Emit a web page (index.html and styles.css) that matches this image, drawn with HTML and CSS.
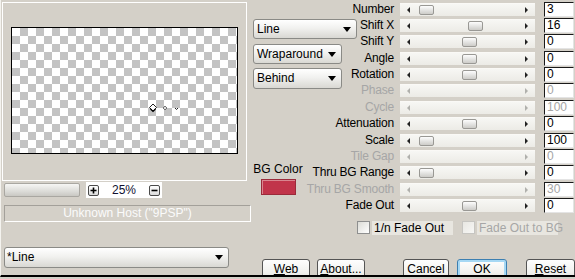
FILE: index.html
```html
<!DOCTYPE html>
<html lang="en">
<head>
<meta charset="UTF-8" />
<title>Kaleidoscope – Settings</title>
<link rel="stylesheet" href="styles.css">
</head>
<body>
<div class="dialog">

  <!-- ------ LEFT: preview + preset ------ -->
  <section class="left">
    <div class="frame">
      <div class="canvas">
        <svg class="marks" width="40" height="10" viewBox="0 0 40 10">
          <path d="M5 1 L8.5 4.5 L5 8 L1.5 4.5 Z" fill="#fff" stroke="#222" stroke-width="1"/>
          <path d="M2.5 6 L5 8.5 L7.5 6" fill="none" stroke="#000" stroke-width="1.2"/>
          <path d="M17 3 L19 5 L17 7 L15 5 Z" fill="#ddd" stroke="#555" stroke-width="0.8"/>
          <path d="M27 5 L28.5 6.5 L30 5" fill="none" stroke="#222" stroke-width="1"/>
        </svg>
      </div>
    </div>

    <div class="zoom-row">
      <div class="pan-bar"></div>
      <div class="zoom-ctrl">
        <span class="mini">
          <svg width="9" height="9" viewBox="0 0 9 9"><path d="M4.5 1.5v6M1.5 4.5h6" stroke="#000" stroke-width="1.6"/></svg>
        </span>
        <span class="zoom-val">25%</span>
        <span class="mini">
          <svg width="9" height="9" viewBox="0 0 9 9"><path d="M1.5 4.5h6" stroke="#000" stroke-width="1.6"/></svg>
        </span>
      </div>
    </div>

    <div class="host">Unknown Host ("9PSP")</div>

    <div class="combo preset"><span>*Line</span><i class="caret"></i></div>
  </section>

  <!-- ------ RIGHT: parameters ------ -->
  <section class="right">
    <div class="top">
      <div class="mid">
        <div class="combo combo-wide"><span>Line</span><i class="caret"></i></div>
        <div class="combo combo-2"><span>Wraparound</span><i class="caret"></i></div>
        <div class="combo combo-3"><span>Behind</span><i class="caret"></i></div>
        <div class="bgcolor">
          <span>BG Color</span>
          <div class="swatch"></div>
        </div>
      </div>

      <div class="params">
        <span class="lbl">Number</span>
        <div class="track"><i class="arr-l"></i><div class="lane"><b class="thumb" style="margin-left:9px"></b></div><i class="arr-r"></i></div>
        <div class="val">3</div>

        <span class="lbl">Shift X</span>
        <div class="track"><i class="arr-l"></i><div class="lane"><b class="thumb" style="margin-left:58px"></b></div><i class="arr-r"></i></div>
        <div class="val">16</div>

        <span class="lbl">Shift Y</span>
        <div class="track"><i class="arr-l"></i><div class="lane"><b class="thumb" style="margin-left:52px"></b></div><i class="arr-r"></i></div>
        <div class="val">0</div>

        <span class="lbl">Angle</span>
        <div class="track"><i class="arr-l"></i><div class="lane"><b class="thumb" style="margin-left:52px"></b></div><i class="arr-r"></i></div>
        <div class="val">0</div>

        <span class="lbl">Rotation</span>
        <div class="track"><i class="arr-l"></i><div class="lane"><b class="thumb" style="margin-left:52px"></b></div><i class="arr-r"></i></div>
        <div class="val">0</div>

        <span class="lbl off">Phase</span>
        <div class="track off"><i class="arr-l"></i><div class="lane"></div><i class="arr-r"></i></div>
        <div class="val off">0</div>

        <span class="lbl off">Cycle</span>
        <div class="track off"><i class="arr-l"></i><div class="lane"></div><i class="arr-r"></i></div>
        <div class="val off">100</div>

        <span class="lbl">Attenuation</span>
        <div class="track"><i class="arr-l"></i><div class="lane"><b class="thumb" style="margin-left:52px"></b></div><i class="arr-r"></i></div>
        <div class="val">0</div>

        <span class="lbl">Scale</span>
        <div class="track"><i class="arr-l"></i><div class="lane"><b class="thumb" style="margin-left:9px"></b></div><i class="arr-r"></i></div>
        <div class="val">100</div>

        <span class="lbl off">Tile Gap</span>
        <div class="track off"><i class="arr-l"></i><div class="lane"></div><i class="arr-r"></i></div>
        <div class="val off">0</div>

        <span class="lbl">Thru BG Range</span>
        <div class="track"><i class="arr-l"></i><div class="lane"><b class="thumb" style="margin-left:9px"></b></div><i class="arr-r"></i></div>
        <div class="val">0</div>

        <span class="lbl off">Thru BG Smooth</span>
        <div class="track off"><i class="arr-l"></i><div class="lane"></div><i class="arr-r"></i></div>
        <div class="val off">30</div>

        <span class="lbl">Fade Out</span>
        <div class="track"><i class="arr-l"></i><div class="lane"><b class="thumb" style="margin-left:52px"></b></div><i class="arr-r"></i></div>
        <div class="val">0</div>
      </div>
    </div>

    <div class="checks">
      <span class="box"></span><span class="check-label">1/n Fade Out</span>
      <span class="box off"></span><span class="check-label off">Fade Out to BG</span>
    </div>

    <div class="buttons">
      <button class="btn btn-web"><u>W</u>eb</button>
      <button class="btn btn-about"><u>A</u>bout...</button>
      <button class="btn btn-cancel">Cancel</button>
      <button class="btn btn-ok">OK</button>
      <button class="btn btn-reset"><u>R</u>eset</button>
    </div>
  </section>
</div>
</body>
</html>
```

FILE: styles.css
```css
/* ---------- Root ---------- */
:root {
  --face: #d4d0c8;
  --off: #a6a6a6;
  --row: 16.36px;
  --font: "Liberation Sans", Arial, sans-serif;
}

body {
  margin: 0;
  width: 575px;
  height: 279px;
  overflow: hidden;
  background: var(--face);
  font: 11px/13px var(--font);
  color: #000;
}

.dialog {
  display: flex;
  height: 277px;
  border-bottom: 2px solid #000;
  border-left: 1px solid #f4f3ef;
  box-sizing: border-box;
  overflow: hidden;
}

/* ---------- Left column ---------- */
.left {
  width: 250px;
  flex: none;
  display: flex;
  flex-direction: column;
}

.frame {
  margin: 2px 0 0 1px;
  width: 245px;
  height: 179px;
  box-sizing: border-box;
  border: 1px solid #fff;
  padding: 24px 0 0 8px;
}

.canvas {
  width: 227px;
  height: 127px;
  box-sizing: border-box;
  border: 1px solid #000;
  background-color: #fff;
  background-image: conic-gradient(#c3c3c3 25%, #fff 0 50%, #c3c3c3 0 75%, #fff 0);
  background-size: 16px 16px;
  padding: 75px 0 0 136px;
}
.marks { display: block; }

.zoom-row {
  display: flex;
  align-items: center;
  height: 16px;
  margin-top: 1px;
}
.pan-bar {
  margin-left: 3px;
  width: 76px;
  height: 14px;
  box-sizing: border-box;
  border: 1px solid #a9a7a1;
  border-radius: 2px;
  background: linear-gradient(#f6f6f4, #dcdcd8 60%, #c9c8c3);
}
.zoom-ctrl {
  margin-left: 6px;
  width: 76px;
  height: 16px;
  background: #fff;
  display: flex;
  align-items: center;
  justify-content: space-between;
  padding: 0 2px;
  box-sizing: border-box;
  color: #101030;
  font-size: 12px;
}
.mini {
  width: 11px;
  height: 11px;
  box-sizing: border-box;
  border: 1px solid #4a4a4a;
  border-radius: 2px;
  background: linear-gradient(#fff, #dcdcdc);
  display: flex;
  align-items: center;
  justify-content: center;
}

.host {
  margin: 7px 0 0 3px;
  width: 247px;
  height: 17px;
  box-sizing: border-box;
  border-top: 1px solid #a3a09a;
  border-left: 1px solid #a3a09a;
  border-bottom: 1px solid #fff;
  border-right: 1px solid #fff;
  color: #fbfbfb;
  text-align: center;
  line-height: 15px;
  font-size: 12px;
}

/* ---------- Combo boxes ---------- */
.combo {
  height: 20px;
  box-sizing: border-box;
  border: 1px solid #8a8a86;
  border-radius: 3px;
  background: linear-gradient(#fff, #f1f1ef 45%, #d9d8d3);
  display: flex;
  align-items: center;
  justify-content: space-between;
  padding: 0 5px 0 3px;
  font-size: 12px;
}
.caret {
  width: 0;
  height: 0;
  border-left: 4px solid transparent;
  border-right: 4px solid transparent;
  border-top: 5px solid #000;
}
.preset {
  margin: 25px 0 0 3px;
  width: 225px;
  height: 21px;
  padding-left: 2px;
}

/* ---------- Right column ---------- */
.right {
  flex: 1;
  display: flex;
  flex-direction: column;
}

.top {
  display: grid;
  grid-template-columns: 106px 1fr;
}
.mid, .params { grid-area: 1 / 1 / 2 / 3; }

.mid {
  display: flex;
  flex-direction: column;
  align-items: flex-start;
  padding: 19px 0 0 2px;
}
.combo-wide { width: 104px; }
.combo-2 { width: 89px; margin-top: 5px; }
.combo-3 { width: 89px; margin-top: 4px; height: 21px; }

.bgcolor {
  width: 50px;
  margin-top: 74px;
  display: flex;
  flex-direction: column;
  align-items: center;
  font-size: 12px;
}
.swatch {
  margin-top: 3px;
  width: 35px;
  height: 16px;
  box-sizing: border-box;
  background: #c1344a;
  border: 1px solid #9a2a3a;
  box-shadow: inset 1px 1px #d9858f;
}

/* ----- parameter rows ----- */
.params {
  display: grid;
  grid-template-columns: 149px 135px 9px 30px;
  grid-auto-rows: var(--row);
  padding-top: 1px;
  align-items: center;
}
.lbl {
  grid-column: 1;
  text-align: right;
  padding-right: 6px;
  white-space: nowrap;
  font-size: 12px;
  letter-spacing: -0.2px;
}
.params .off { color: var(--off); }

.track {
  grid-column: 2;
  height: 13px;
  display: flex;
  align-items: center;
  padding: 0 7px;
  background: linear-gradient(#f7f7f4, #ecebe6);
  border-top: 1px solid #faf9f6;
  box-sizing: border-box;
}
.lane { flex: 1; display: flex; align-items: center; }
.arr-l, .arr-r {
  width: 0;
  height: 0;
  border-top: 3px solid transparent;
  border-bottom: 3px solid transparent;
}
.arr-l { border-right: 3px solid #222; }
.arr-r { border-left: 3px solid #222; }
.track.off .arr-l { border-right-color: #b0b0ac; }
.track.off .arr-r { border-left-color: #b0b0ac; }

.thumb {
  width: 15px;
  height: 10px;
  box-sizing: border-box;
  border: 1px solid #999894;
  border-radius: 2px;
  background: linear-gradient(#fdfdfd, #e2e2e0 55%, #cdccc8);
}

.val {
  grid-column: 4;
  height: 15px;
  box-sizing: border-box;
  background: #fff;
  border: 1px solid;
  border-color: #1a1a1a #e4e4e4 #e4e4e4 #1a1a1a;
  padding-left: 2px;
  font-size: 12px;
  line-height: 13px;
}

/* ---------- Check boxes ---------- */
.checks {
  display: flex;
  align-items: center;
  margin-top: 7px;
  padding-left: 106px;
  height: 14px;
}
.box {
  flex: none;
  width: 13px;
  height: 13px;
  box-sizing: border-box;
  border: 1px solid #8e8f8f;
  background: linear-gradient(135deg, #dcdcd7, #fff);
}
.box.off { border-color: #c6c5c1; background: linear-gradient(135deg, #e8e7e2, #f7f7f5); margin-left: 9px; }
.check-label {
  flex: none;
  margin-left: 2px;
  padding-left: 2px;
  width: 81px;
  box-sizing: border-box;
  background: #e8e6e0;
  font-size: 12px;
  line-height: 14px;
  white-space: nowrap;
}
.check-label.off { color: var(--off); width: 81px; }

/* ---------- Buttons ---------- */
.buttons {
  display: flex;
  margin-top: 24px;
  padding-left: 11px;
}
.btn {
  font: 12px var(--font);
  height: 23px;
  width: 48px;
  padding: 0;
  box-sizing: border-box;
  border: 1px solid #545454;
  border-radius: 3px;
  background: linear-gradient(#fefefe, #f1f1ee 60%, #dedcd6);
  color: #000;
  padding-bottom: 3px;
}
.btn-about { margin-left: 7px; }
.btn-cancel { margin-left: 38px; width: 46px; }
.btn-ok {
  margin-left: 8px;
  width: 50px;
  border-color: #3c7fb1;
  box-shadow: inset 0 0 0 2px #a6d8f4;
}
.btn-reset { margin-left: 19px; width: 49px; }
```
